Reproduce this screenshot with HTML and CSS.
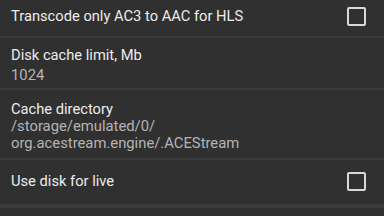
FILE: index.html
```html
<!DOCTYPE html>
<html lang="en">
<head>
    <meta charset="UTF-8">
    <meta name="viewport" content="width=device-width, initial-scale=1.0">
    <title>Settings</title>
    <link rel="stylesheet" href="styles.css">
</head>
<body>
    <ul class="prefs">
        <li class="pref pref-check">
            <div class="pref-text">
                <span class="pref-title">Transcode only AC3 to AAC for HLS</span>
            </div>
            <span class="checkbox"></span>
        </li>
        <li class="pref pref-two">
            <div class="pref-text">
                <span class="pref-title">Disk cache limit, Mb</span>
                <span class="pref-summary">1024</span>
            </div>
        </li>
        <li class="pref pref-three">
            <div class="pref-text">
                <span class="pref-title">Cache directory</span>
                <span class="pref-summary">/storage/emulated/0/<br>org.acestream.engine/.ACEStream</span>
            </div>
        </li>
        <li class="pref pref-check pref-live">
            <div class="pref-text">
                <span class="pref-title">Use disk for live</span>
            </div>
            <span class="checkbox"></span>
        </li>
        <li class="pref pref-empty"></li>
    </ul>
</body>
</html>
```
FILE: styles.css
```css
body {
    margin: 0;
    padding: 0;
    background-color: #303030;
    font-family: Roboto, "Liberation Sans", sans-serif;
    overflow: hidden;
}
.prefs {
    list-style: none;
    margin: 0;
    padding: 0;
}
.pref {
    display: flex;
    align-items: center;
    justify-content: space-between;
    padding: 0 18px 0 11px;
    border-bottom: 2px solid #3b3b3b;
    box-sizing: border-box;
}
.pref-text {
    display: flex;
    flex-direction: column;
}
.pref-title {
    color: #ececec;
    font-size: 14.7px;
    line-height: 18px;
}
.pref-summary {
    color: #b4b4b4;
    font-size: 14.8px;
    line-height: 17px;
}
.pref-check {
    height: 38px;
    padding-bottom: 4px;
}
.pref-two {
    height: 52px;
    padding-top: 3px;
}
.pref-two .pref-summary {
    margin-top: 3px;
}
.pref-three {
    height: 70px;
    padding-top: 4px;
}
.pref-live {
    height: 46px;
    padding-bottom: 2px;
}
.checkbox {
    width: 15px;
    height: 15px;
    border: 2px solid #d8d8d8;
    border-radius: 2px;
}
```
